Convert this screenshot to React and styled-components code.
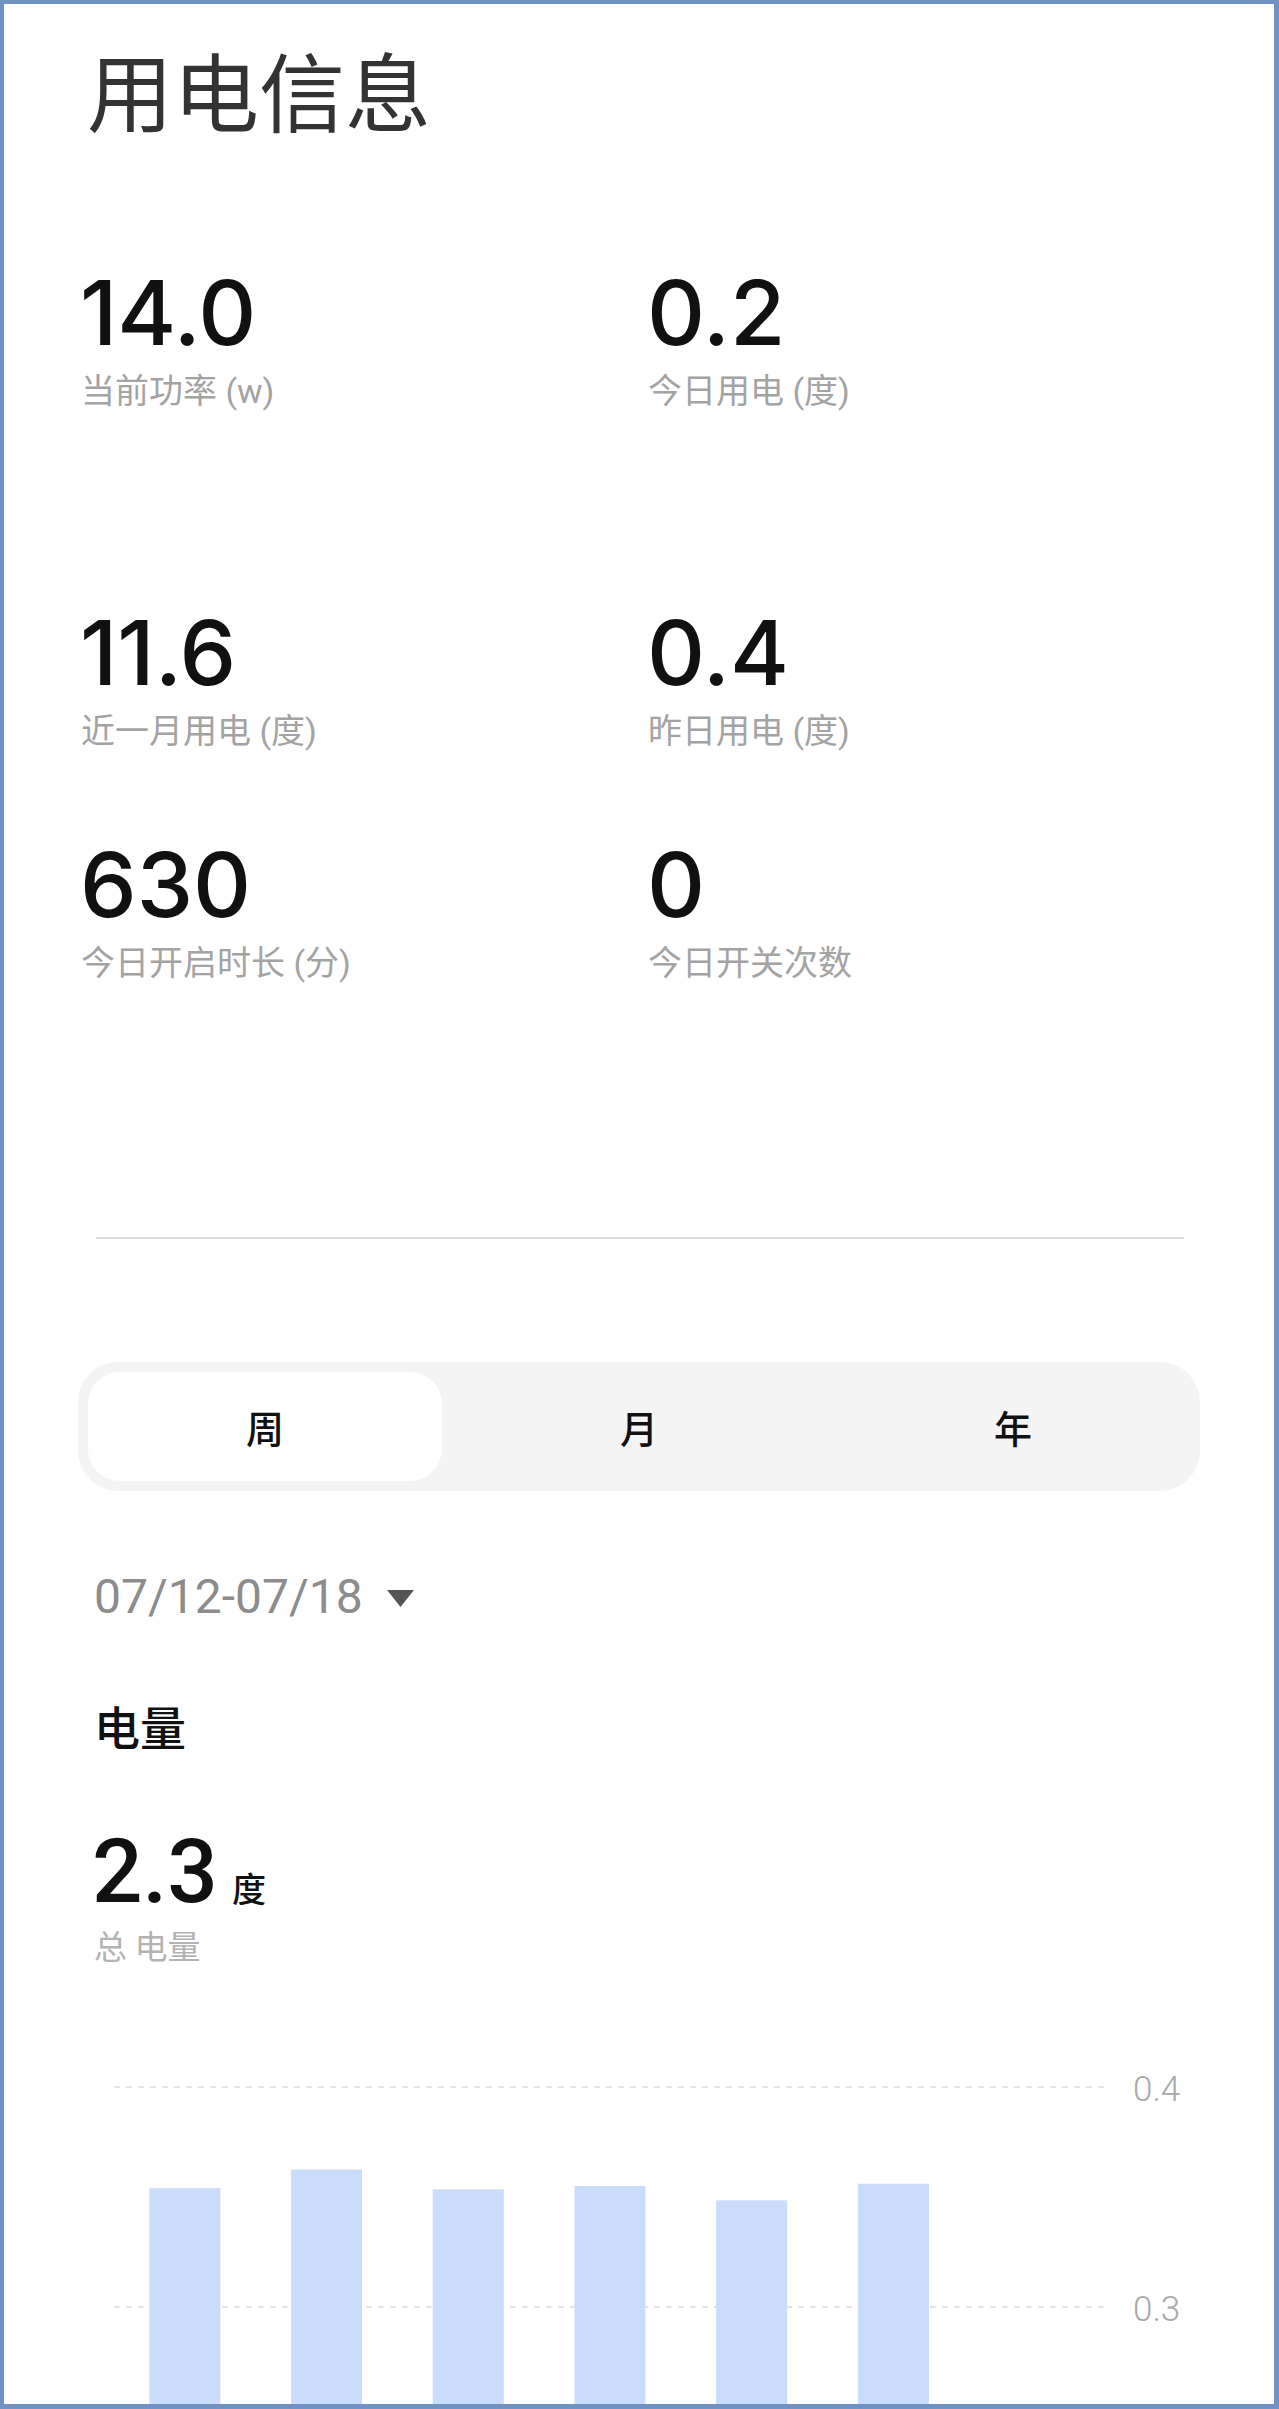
import React from 'react';
import styled, { createGlobalStyle } from 'styled-components';

const GlobalStyle = createGlobalStyle`
  html, body {
    margin: 0;
    padding: 0;
    background: #ffffff;
  }
  * {
    box-sizing: border-box;
  }
`;

const Frame = styled.div`
  width: 1279px;
  height: 2409px;
  overflow: hidden;
  background: #ffffff;
  border-style: solid;
  border-color: #7193c4;
  border-width: 4px 5px 5px 4px;
  font-family: Roboto, "Noto Sans CJK SC", sans-serif;
`;

const Title = styled.h1`
  margin: 42px 0 0 83px;
  font-family: "Noto Sans CJK SC", sans-serif;
  font-size: 86px;
  line-height: 86px;
  font-weight: 400;
  color: #333333;
`;

const StatsGrid = styled.div`
  margin: 135px 0 0 72px;
  display: grid;
  grid-template-columns: 567px 1fr;
  grid-template-rows: 340px 232px auto;
`;

const Stat = styled.div`
  display: flex;
  flex-direction: column;
`;

const StatValue = styled.div`
  padding-left: 4px;
  font-family: Inter, Roboto, sans-serif;
  font-size: 90px;
  line-height: 92px;
  font-weight: 500;
  color: #111111;
`;

const StatLabel = styled.div`
  margin-top: 12px;
  padding-left: 5px;
  font-family: Roboto, "Noto Sans CJK SC", sans-serif;
  font-size: 34px;
  line-height: 40px;
  color: #a3a3a3;
`;

const Divider = styled.hr`
  margin: 254px 0 0 92px;
  width: 1088px;
  height: 2px;
  border: none;
  background: #dcdcdc;
`;

const Segmented = styled.div`
  margin: 123px 0 0 74px;
  width: 1122px;
  height: 129px;
  padding: 10px;
  display: grid;
  grid-template-columns: repeat(3, 1fr);
  gap: 20px;
  background: #f4f4f4;
  border-radius: 40px;
`;

const Segment = styled.div`
  display: flex;
  align-items: center;
  justify-content: center;
  border-radius: 32px;
  background: ${(p) => (p.active ? '#ffffff' : 'transparent')};
  font-family: "Noto Sans CJK SC", sans-serif;
  font-size: 38px;
  line-height: 1;
  font-weight: 500;
  color: #111111;
`;

const DateRow = styled.div`
  margin: 82px 0 0 90px;
  display: flex;
  align-items: center;
  height: 48px;
`;

const DateText = styled.span`
  font-family: Roboto, sans-serif;
  font-size: 48px;
  line-height: 48px;
  color: #8c8c8c;
`;

const Caret = styled.svg`
  margin-left: 24px;
  margin-top: 2px;
  width: 27px;
  height: 17px;
`;

const SectionTitle = styled.div`
  margin: 81px 0 0 90px;
  font-family: "Noto Sans CJK SC", sans-serif;
  font-size: 46px;
  line-height: 46px;
  font-weight: 500;
  color: #111111;
`;

const TotalRow = styled.div`
  margin: 79px 0 0 88px;
  display: flex;
  align-items: baseline;
  height: 89px;
`;

const TotalValue = styled.span`
  font-family: Roboto, sans-serif;
  font-size: 89px;
  line-height: 89px;
  font-weight: 500;
  color: #111111;
`;

const TotalUnit = styled.span`
  margin-left: 14px;
  font-family: "Noto Sans CJK SC", sans-serif;
  font-size: 34px;
  line-height: 34px;
  font-weight: 500;
  color: #111111;
`;

const TotalLabel = styled.div`
  margin: 13px 0 0 90px;
  font-family: "Noto Sans CJK SC", sans-serif;
  font-size: 33px;
  line-height: 33px;
  color: #b3b3b3;
`;

const Chart = styled.svg`
  display: block;
  margin: 77px 0 0 96px;
  width: 1100px;
  height: 400px;
`;

const stats = [
  { value: '14.0', label: '当前功率 (w)' },
  { value: '0.2', label: '今日用电 (度)' },
  { value: '11.6', label: '近一月用电 (度)' },
  { value: '0.4', label: '昨日用电 (度)' },
  { value: '630', label: '今日开启时长 (分)' },
  { value: '0', label: '今日开关次数' },
];

const tabs = ['周', '月', '年'];

const bars = [0.354, 0.3625, 0.3535, 0.355, 0.3485, 0.356];

const GRID_TOP = 48;
const PX_PER_UNIT = 2200;
const SLOT = 141.7;
const BAR_W = 71;

function BarChart() {
  const y03 = GRID_TOP + 0.1 * PX_PER_UNIT;
  return (
    <Chart viewBox="0 0 1100 400">
      <line x1="14" x2="1006" y1={GRID_TOP} y2={GRID_TOP} stroke="#e4e4e4" strokeWidth="2" strokeDasharray="6 6" />
      <line x1="14" x2="1006" y1={y03} y2={y03} stroke="#e4e4e4" strokeWidth="2" strokeDasharray="6 6" />
      <text x="1033" y={GRID_TOP + 14} fontFamily="Roboto, sans-serif" fontSize="35" fontWeight="300" fill="#a8a8a8">0.4</text>
      <text x="1033" y={y03 + 14} fontFamily="Roboto, sans-serif" fontSize="35" fontWeight="300" fill="#a8a8a8">0.3</text>
      {bars.map((v, i) => {
        const top = GRID_TOP + (0.4 - v) * PX_PER_UNIT;
        return (
          <rect
            key={i}
            x={14 + i * SLOT + (SLOT - BAR_W) / 2}
            y={top}
            width={BAR_W}
            height={400 - top}
            fill="#c9dcf9"
          />
        );
      })}
    </Chart>
  );
}

export default function App() {
  return (
    <>
      <GlobalStyle />
      <Frame>
        <Title>用电信息</Title>

        <StatsGrid>
          {stats.map((s) => (
            <Stat key={s.label}>
              <StatValue>{s.value}</StatValue>
              <StatLabel>{s.label}</StatLabel>
            </Stat>
          ))}
        </StatsGrid>

        <Divider />

        <Segmented>
          {tabs.map((t, i) => (
            <Segment key={t} active={i === 0}>{t}</Segment>
          ))}
        </Segmented>

        <DateRow>
          <DateText>07/12-07/18</DateText>
          <Caret viewBox="0 0 27 17">
            <path d="M0 0 H27 L13.5 17 Z" fill="#555555" />
          </Caret>
        </DateRow>

        <SectionTitle>电量</SectionTitle>

        <TotalRow>
          <TotalValue>2.3</TotalValue>
          <TotalUnit>度</TotalUnit>
        </TotalRow>
        <TotalLabel>总 电量</TotalLabel>

        <BarChart />
      </Frame>
    </>
  );
}
